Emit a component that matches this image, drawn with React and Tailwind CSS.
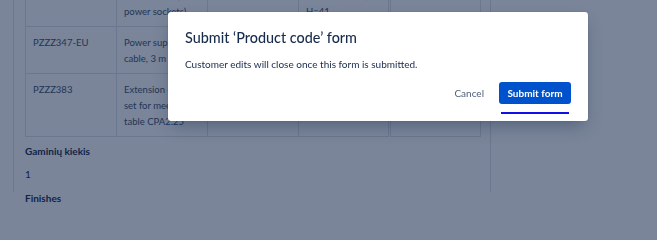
import React from "react";

const rows = [
  { code: "", name: ["Desk socket (2x", "power sockets)"], c3: [], c4: ["W=120, D=80,", "H=41"], c5: [] },
  { code: "PZZZ347-EU", name: ["Power supply", "cable, 3 m"], c3: [], c4: [], c5: [] },
  { code: "PZZZ383", name: ["Extension cable", "set for meeting", "table CPA2.25"], c3: [], c4: [], c5: [] },
];

function Cell({ lines, last }) {
  return (
    <td className={`align-top border border-[#dfe1e6] px-[7px] pt-[8px] pb-[6px] w-[91px] ${last ? "border-r-[3px] border-double" : ""}`}>
      {lines.map((l, i) => (
        <div key={i} className="whitespace-nowrap">{l}</div>
      ))}
    </td>
  );
}

export default function App() {
  return (
    <div className="relative h-[213px] overflow-hidden bg-white font-['Lato',sans-serif] text-[#172b4d]">
      {/* page under the blanket */}
      <div className="ml-[13px] w-[478px] h-full border-l border-r border-[#dfe1e6] pl-[11px]">
        <table className="-mt-[21px] border-collapse text-[9.5px] leading-[16px] text-[#42526e] table-fixed w-[454px]">
          <tbody>
            {rows.map((r, i) => (
              <tr key={i}>
                <Cell lines={r.code ? [r.code] : []} />
                <Cell lines={r.name} />
                <Cell lines={r.c3} />
                <Cell lines={r.c4} last />
                <Cell lines={r.c5} />
              </tr>
            ))}
          </tbody>
        </table>
        <div className="mt-[6px] text-[10px] leading-[16px] font-bold">Gaminių kiekis</div>
        <div className="mt-[7px] text-[10px] leading-[16px]">1</div>
        <div className="mt-[8px] text-[10px] leading-[16px] font-bold">Finishes</div>
      </div>

      {/* blanket */}
      <div className="fixed inset-0 bg-[rgba(9,30,66,0.54)]" />

      {/* modal */}
      <div className="absolute left-[168px] top-[12px] w-[420px] h-[109px] bg-white rounded-[3px] shadow-[0_8px_16px_-4px_rgba(9,30,66,0.35),0_0_1px_rgba(9,30,66,0.4)] px-[17px] pt-[16px]">
        <h2 className="text-[14.4px] leading-[20px] font-medium text-[#172b4d]">Submit ‘Product code’ form</h2>
        <p className="mt-[8px] text-[10px] leading-[16px] text-[#172b4d]">Customer edits will close once this form is submitted.</p>
        <div className="mt-[10px] flex justify-end items-start gap-[15px]">
          <button className="h-[22px] text-[10px] text-[#505f79]">Cancel</button>
          <div className="flex flex-col items-center">
            <button className="h-[22px] w-[72px] rounded-[3px] bg-[#0052cc] text-white text-[10px] font-bold">Submit form</button>
            <div className="mt-[8px] h-[2px] w-[68px] bg-[#1010e6]" />
          </div>
        </div>
      </div>
    </div>
  );
}
